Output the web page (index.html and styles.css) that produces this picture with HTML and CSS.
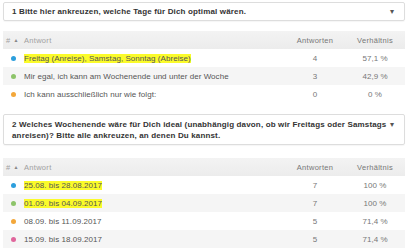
FILE: index.html
```html
<!DOCTYPE html>
<html lang="de">
<head>
<meta charset="utf-8">
<link rel="stylesheet" href="styles.css">
</head>
<body>
<div class="page">
  <div class="question">
    <span class="q-text">1 Bitte hier ankreuzen, welche Tage für Dich optimal wären.</span>
    <span class="caret">▾</span>
  </div>
  <div class="table">
    <div class="row head">
      <div class="c-num">#<span class="sort">▲</span></div>
      <div class="c-ans">Antwort</div>
      <div class="c-cnt">Antworten</div>
      <div class="c-pct">Verhältnis</div>
    </div>
    <div class="row">
      <div class="c-num"><span class="dot blue"></span></div>
      <div class="c-ans"><mark>Freitag (Anreise), Samstag, Sonntag (Abreise)</mark></div>
      <div class="c-cnt">4</div>
      <div class="c-pct">57,1 %</div>
    </div>
    <div class="row alt">
      <div class="c-num"><span class="dot green"></span></div>
      <div class="c-ans">Mir egal, ich kann am Wochenende und unter der Woche</div>
      <div class="c-cnt">3</div>
      <div class="c-pct">42,9 %</div>
    </div>
    <div class="row">
      <div class="c-num"><span class="dot orange"></span></div>
      <div class="c-ans">Ich kann ausschließlich nur wie folgt:</div>
      <div class="c-cnt">0</div>
      <div class="c-pct">0 %</div>
    </div>
  </div>

  <div class="question q2">
    <span class="q-text">2 Welches Wochenende wäre für Dich ideal (unabhängig davon, ob wir Freitags oder Samstags<br>anreisen)? Bitte alle ankreuzen, an denen Du kannst.</span>
    <span class="caret">▾</span>
  </div>
  <div class="table t2">
    <div class="row head">
      <div class="c-num">#<span class="sort">▲</span></div>
      <div class="c-ans">Antwort</div>
      <div class="c-cnt">Antworten</div>
      <div class="c-pct">Verhältnis</div>
    </div>
    <div class="row">
      <div class="c-num"><span class="dot blue"></span></div>
      <div class="c-ans"><mark>25.08. bis 28.08.2017</mark></div>
      <div class="c-cnt">7</div>
      <div class="c-pct">100 %</div>
    </div>
    <div class="row alt">
      <div class="c-num"><span class="dot green"></span></div>
      <div class="c-ans"><mark>01.09. bis 04.09.2017</mark></div>
      <div class="c-cnt">7</div>
      <div class="c-pct">100 %</div>
    </div>
    <div class="row">
      <div class="c-num"><span class="dot orange"></span></div>
      <div class="c-ans">08.09. bis 11.09.2017</div>
      <div class="c-cnt">5</div>
      <div class="c-pct">71,4 %</div>
    </div>
    <div class="row alt">
      <div class="c-num"><span class="dot pink"></span></div>
      <div class="c-ans">15.09. bis 18.09.2017</div>
      <div class="c-cnt">5</div>
      <div class="c-pct">71,4 %</div>
    </div>
  </div>
</div>
</body>
</html>
```

FILE: styles.css
```css
html, body {
  margin: 0;
  padding: 0;
  background: #ffffff;
}

.page {
  padding: 2px 4px 0 3px;
  font-family: "Liberation Sans", Arial, sans-serif;
  font-size: 8px;
  letter-spacing: 0.05px;
  color: #555555;
}

.question {
  display: flex;
  align-items: flex-start;
  gap: 4px;
  border: 1px solid #dddddd;
  border-radius: 2px;
  padding: 3px 6px 3px 8px;
  line-height: 11px;
  letter-spacing: 0.15px;
  box-shadow: 0 1px 1px rgba(0,0,0,0.04);
}

.q-text {
  flex: 1;
  font-weight: bold;
  color: #333333;
  white-space: nowrap;
}

.caret {
  color: #555555;
  font-size: 8px;
  width: 8px;
  letter-spacing: 0;
}

.table {
  margin-top: 10px;
}

.q2 {
  margin-top: 11px;
  padding-top: 4px;
  padding-bottom: 3px;
}

.table.t2 {
  margin-top: 13px;
}

.row {
  display: grid;
  grid-template-columns: 17px 1fr 60px 60px;
  align-items: center;
  height: 18px;
  background: #ffffff;
}

.row.alt {
  background: #f5f5f5;
}

.row.head {
  background: linear-gradient(#f3f3f3, #ececec);
  color: #a0a0a0;
  font-size: 7.5px;
  letter-spacing: 0.3px;
}

.c-num {
  padding-left: 3px;
  display: flex;
  align-items: center;
}

.sort {
  font-size: 5px;
  margin-left: 3px;
  color: #888888;
}

.c-ans {
  padding-left: 4px;
  white-space: nowrap;
}

.c-cnt, .c-pct {
  text-align: center;
  color: #777777;
}

mark {
  background: #fbfb2a;
  color: #555555;
}

.dot {
  display: inline-block;
  width: 5px;
  height: 5px;
  border-radius: 50%;
  margin-left: 5px;
}

.dot.blue { background: #2d9fdd; }
.dot.green { background: #8dc46a; }
.dot.orange { background: #f3a73a; }
.dot.pink { background: #e0669c; }
```
